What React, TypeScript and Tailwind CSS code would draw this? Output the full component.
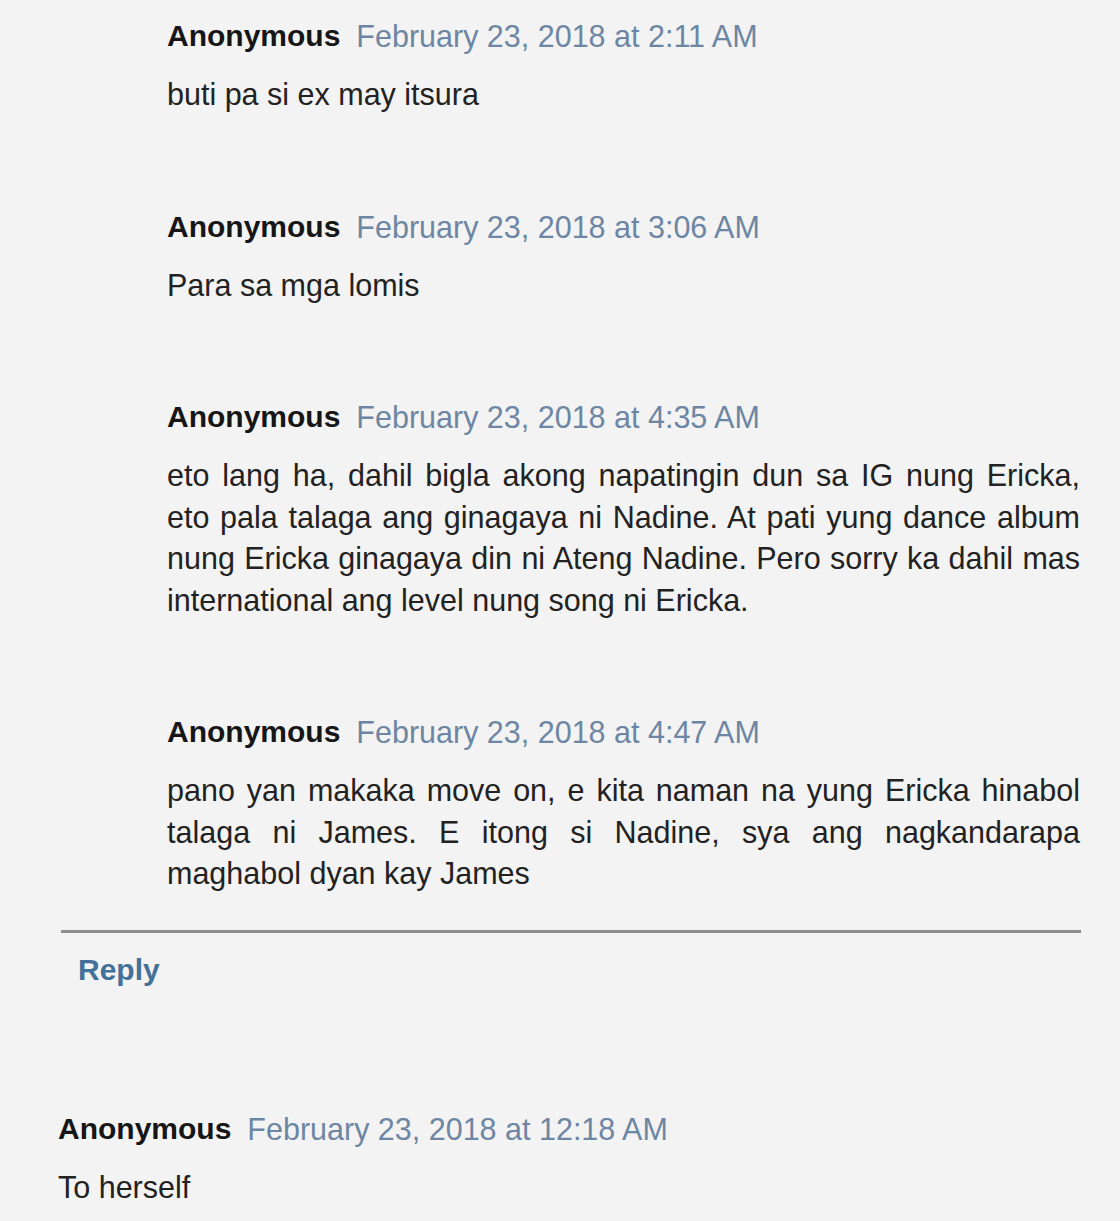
import React from "react";

type C = { date: string; lines: string[] };

const nested: C[] = [
  { date: "February 23, 2018 at 2:11 AM", lines: ["buti pa si ex may itsura"] },
  { date: "February 23, 2018 at 3:06 AM", lines: ["Para sa mga lomis"] },
  {
    date: "February 23, 2018 at 4:35 AM",
    lines: [
      "eto lang ha, dahil bigla akong napatingin dun sa IG nung Ericka,",
      "eto pala talaga ang ginagaya ni Nadine. At pati yung dance album",
      "nung Ericka ginagaya din ni Ateng Nadine. Pero sorry ka dahil mas",
      "international ang level nung song ni Ericka.",
    ],
  },
  {
    date: "February 23, 2018 at 4:47 AM",
    lines: [
      "pano yan makaka move on, e kita naman na yung Ericka hinabol",
      "talaga ni James. E itong si Nadine, sya ang nagkandarapa",
      "maghabol dyan kay James",
    ],
  },
];

function Header({ date }: { date: string }) {
  return (
    <div className="flex items-center h-[42px] leading-[42px] whitespace-nowrap">
      <span className="font-bold text-[#161616] text-[30px]">Anonymous</span>
      <span className="ml-[16px] text-[#6d86a3] text-[30.5px]">{date}</span>
    </div>
  );
}

export default function App() {
  return (
    <div
      className="w-[1120px] h-[1221px] bg-[#f3f3f3] overflow-hidden pt-[15px]"
      style={{ fontFamily: '"Liberation Sans", Arial, sans-serif' }}
    >
      <div className="pl-[167px] pr-[40px] flex flex-col">
        {nested.map((c, i) => (
          <div key={i} className={i === 0 ? "" : "mt-[90px]"}>
            <Header date={c.date} />
            <div className="mt-[17px] text-[30.5px] leading-[41.5px] text-[#222222]">
              {c.lines.map((l, j) => (
                <div
                  key={j}
                  className={
                    j < c.lines.length - 1
                      ? "whitespace-nowrap text-justify [text-align-last:justify]"
                      : "whitespace-nowrap"
                  }
                >
                  {l}
                </div>
              ))}
            </div>
          </div>
        ))}
      </div>
      <div className="ml-[61px] mr-[39px] mt-[35px] h-[3px] bg-[#8c8c8c]" />
      <div className="pl-[78px] mt-[16px] h-[42px] leading-[42px] text-[30px] font-bold text-[#43719a]">
        Reply
      </div>
      <div className="pl-[58px] mt-[117px]">
        <Header date="February 23, 2018 at 12:18 AM" />
        <p className="mt-[17px] text-[30.5px] leading-[41.5px] text-[#222222]">To herself</p>
      </div>
    </div>
  );
}
